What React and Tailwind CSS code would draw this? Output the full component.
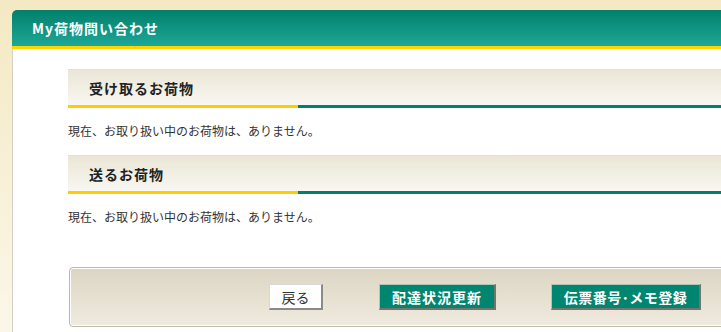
export default function App() {
  const font = { fontFamily: '"Noto Sans CJK JP", "Liberation Sans", sans-serif' };
  const Section = ({ title }) => (
    <div>
      <div className="h-[36px] bg-gradient-to-b from-[#ebe6d6] to-[#f8f7f1] border-t border-[#e4dfd0] flex items-center pl-[21px]">
        <span className="text-[14px] tracking-[1px] font-bold text-[#222] leading-none">{title}</span>
      </div>
      <div className="flex h-[3px]">
        <div className="w-[230px] bg-[#ffcc00]" />
        <div className="flex-1 bg-[#00806e]" />
      </div>
    </div>
  );
  const Msg = () => (
    <p className="text-[12px] leading-[18px] text-[#333]">現在、お取り扱い中のお荷物は、ありません。</p>
  );
  return (
    <div
      className="w-[721px] h-[332px] overflow-hidden bg-gradient-to-b from-[#f4e9c3] to-[#fbf7e8] pt-[10px] pl-[12px]"
      style={font}
    >
      <div className="w-[820px]">
        <div className="h-[36px] rounded-tl-[5px] bg-gradient-to-b from-[#02806c] to-[#1ca797] flex items-center pl-[20px]">
          <span className="text-white font-bold text-[14px] tracking-[1px] leading-none">My荷物問い合わせ</span>
        </div>
        <div className="h-[3px] bg-[#ffd400]" />
        <div className="bg-white border-l border-[#d6d1c4] pl-[55px] pt-[20px] h-[300px]">
          <Section title="受け取るお荷物" />
          <div className="mt-[14px] mb-[15px]">
            <Msg />
          </div>
          <Section title="送るお荷物" />
          <div className="mt-[14px]">
            <Msg />
          </div>
          <div className="mt-[41px] ml-[1px] h-[60px] rounded-[4px] border border-[#bdb8aa] shadow-[inset_0_0_0_1px_#ffffff] bg-gradient-to-b from-[#dcd5c3] to-[#f0ebdf] flex items-center pl-[199px] gap-[56px]">
            <button className="w-[54px] h-[26px] bg-white border-t border-l border-[#d8d8d8] border-r-2 border-b-2 border-r-[#8a8a8a] border-b-[#8a8a8a] text-[14px] text-[#333] leading-none flex items-center justify-center">
              戻る
            </button>
            <button className="w-[117px] h-[26px] bg-[#008571] border-t border-l border-[#a8c8b8] border-r-2 border-b-2 border-r-[#757570] border-b-[#757570] text-[14px] tracking-[1px] font-bold text-white leading-none flex items-center justify-center">
              配達状況更新
            </button>
            <button className="ml-[-1px] w-[150px] h-[26px] bg-[#008571] border-t border-l border-[#a8c8b8] border-r-2 border-b-2 border-r-[#757570] border-b-[#757570] text-[14px] tracking-[0.5px] font-bold text-white leading-none flex items-center justify-center">
              伝票番号･メモ登録
            </button>
          </div>
        </div>
      </div>
    </div>
  );
}
